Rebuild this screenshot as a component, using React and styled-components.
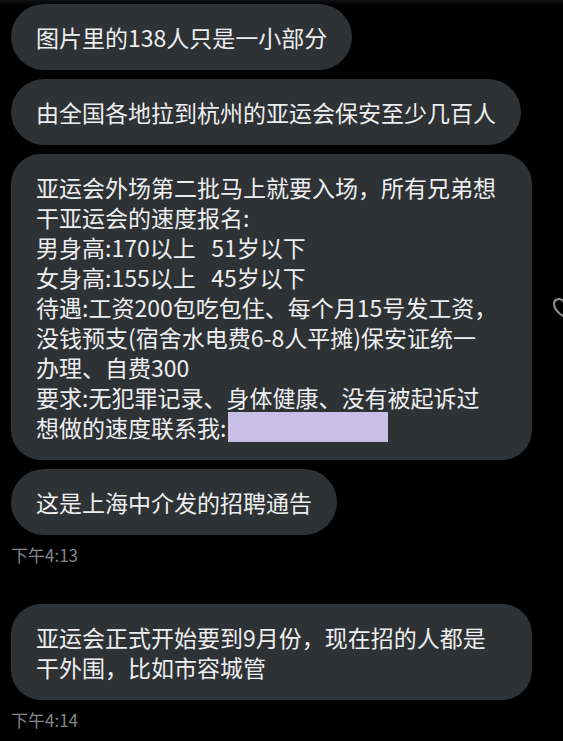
import React from 'react';
import styled, { createGlobalStyle } from 'styled-components';

const GlobalStyle = createGlobalStyle`
    html, body {
        margin: 0;
        padding: 0;
        background: #000;
        overflow: hidden;
    }
    body {
        font-family: "Noto Sans CJK SC", "Noto Sans", sans-serif;
    }
`;

const Page = styled.div`
    width: 563px;
    height: 741px;
    box-sizing: border-box;
    padding: 4px 0 0 11px;
    background: linear-gradient(#121315, #000 5px);
    overflow: hidden;
    display: flex;
    flex-direction: column;
    gap: 39px;
`;

const Group = styled.div`
    display: flex;
    flex-direction: column;
    align-items: flex-start;
    gap: 9px;
`;

const Row = styled.div`
    display: flex;
    align-items: center;
    gap: 19px;
`;

const Bubble = styled.div`
    box-sizing: border-box;
    width: ${(p) => (p.$full ? '521px' : 'auto')};
    max-width: 521px;
    padding: 18px 25px;
    background: #2f3235;
    color: #eceef0;
    font-size: 23px;
    line-height: 30px;
    white-space: pre-wrap;
    border-radius: ${(p) => (p.$full ? '30px' : '33px')};
`;

const Redacted = styled.span`
    display: inline-block;
    vertical-align: top;
    width: 160px;
    height: 30px;
    margin-left: 2px;
    background: #c8bfe7;
`;

const Time = styled.div`
    margin-top: 1px;
    font-size: 17px;
    line-height: 20px;
    color: #84878b;
`;

const HeartButton = styled.div`
    flex: none;
    width: 24px;
    height: 24px;
    display: flex;
    align-items: center;
    justify-content: center;
`;

function Heart() {
    return (
        <svg width="24" height="24" viewBox="0 0 24 24" fill="none" stroke="#8e9195" strokeWidth="2">
            <path d="M12 21s-9-5.5-9-12a5 5 0 0 1 9-3 5 5 0 0 1 9 3c0 6.5-9 12-9 12z" />
        </svg>
    );
}

export default function App() {
    return (
        <>
            <GlobalStyle />
            <Page>
                <Group>
                    <Bubble>图片里的138人只是一小部分</Bubble>
                    <Bubble>由全国各地拉到杭州的亚运会保安至少几百人</Bubble>
                    <Row>
                        <Bubble $full>
                            {'亚运会外场第二批马上就要入场，所有兄弟想\n干亚运会的速度报名:\n男身高:170以上   51岁以下\n女身高:155以上   45岁以下\n待遇:工资200包吃包住、每个月15号发工资，\n没钱预支(宿舍水电费6-8人平摊)保安证统一\n办理、自费300\n要求:无犯罪记录、身体健康、没有被起诉过\n想做的速度联系我:'}
                            <Redacted />
                        </Bubble>
                        <HeartButton>
                            <Heart />
                        </HeartButton>
                    </Row>
                    <Bubble>这是上海中介发的招聘通告</Bubble>
                    <Time>下午4:13</Time>
                </Group>
                <Group>
                    <Bubble $full>{'亚运会正式开始要到9月份，现在招的人都是\n干外围，比如市容城管'}</Bubble>
                    <Time>下午4:14</Time>
                </Group>
            </Page>
        </>
    );
}
